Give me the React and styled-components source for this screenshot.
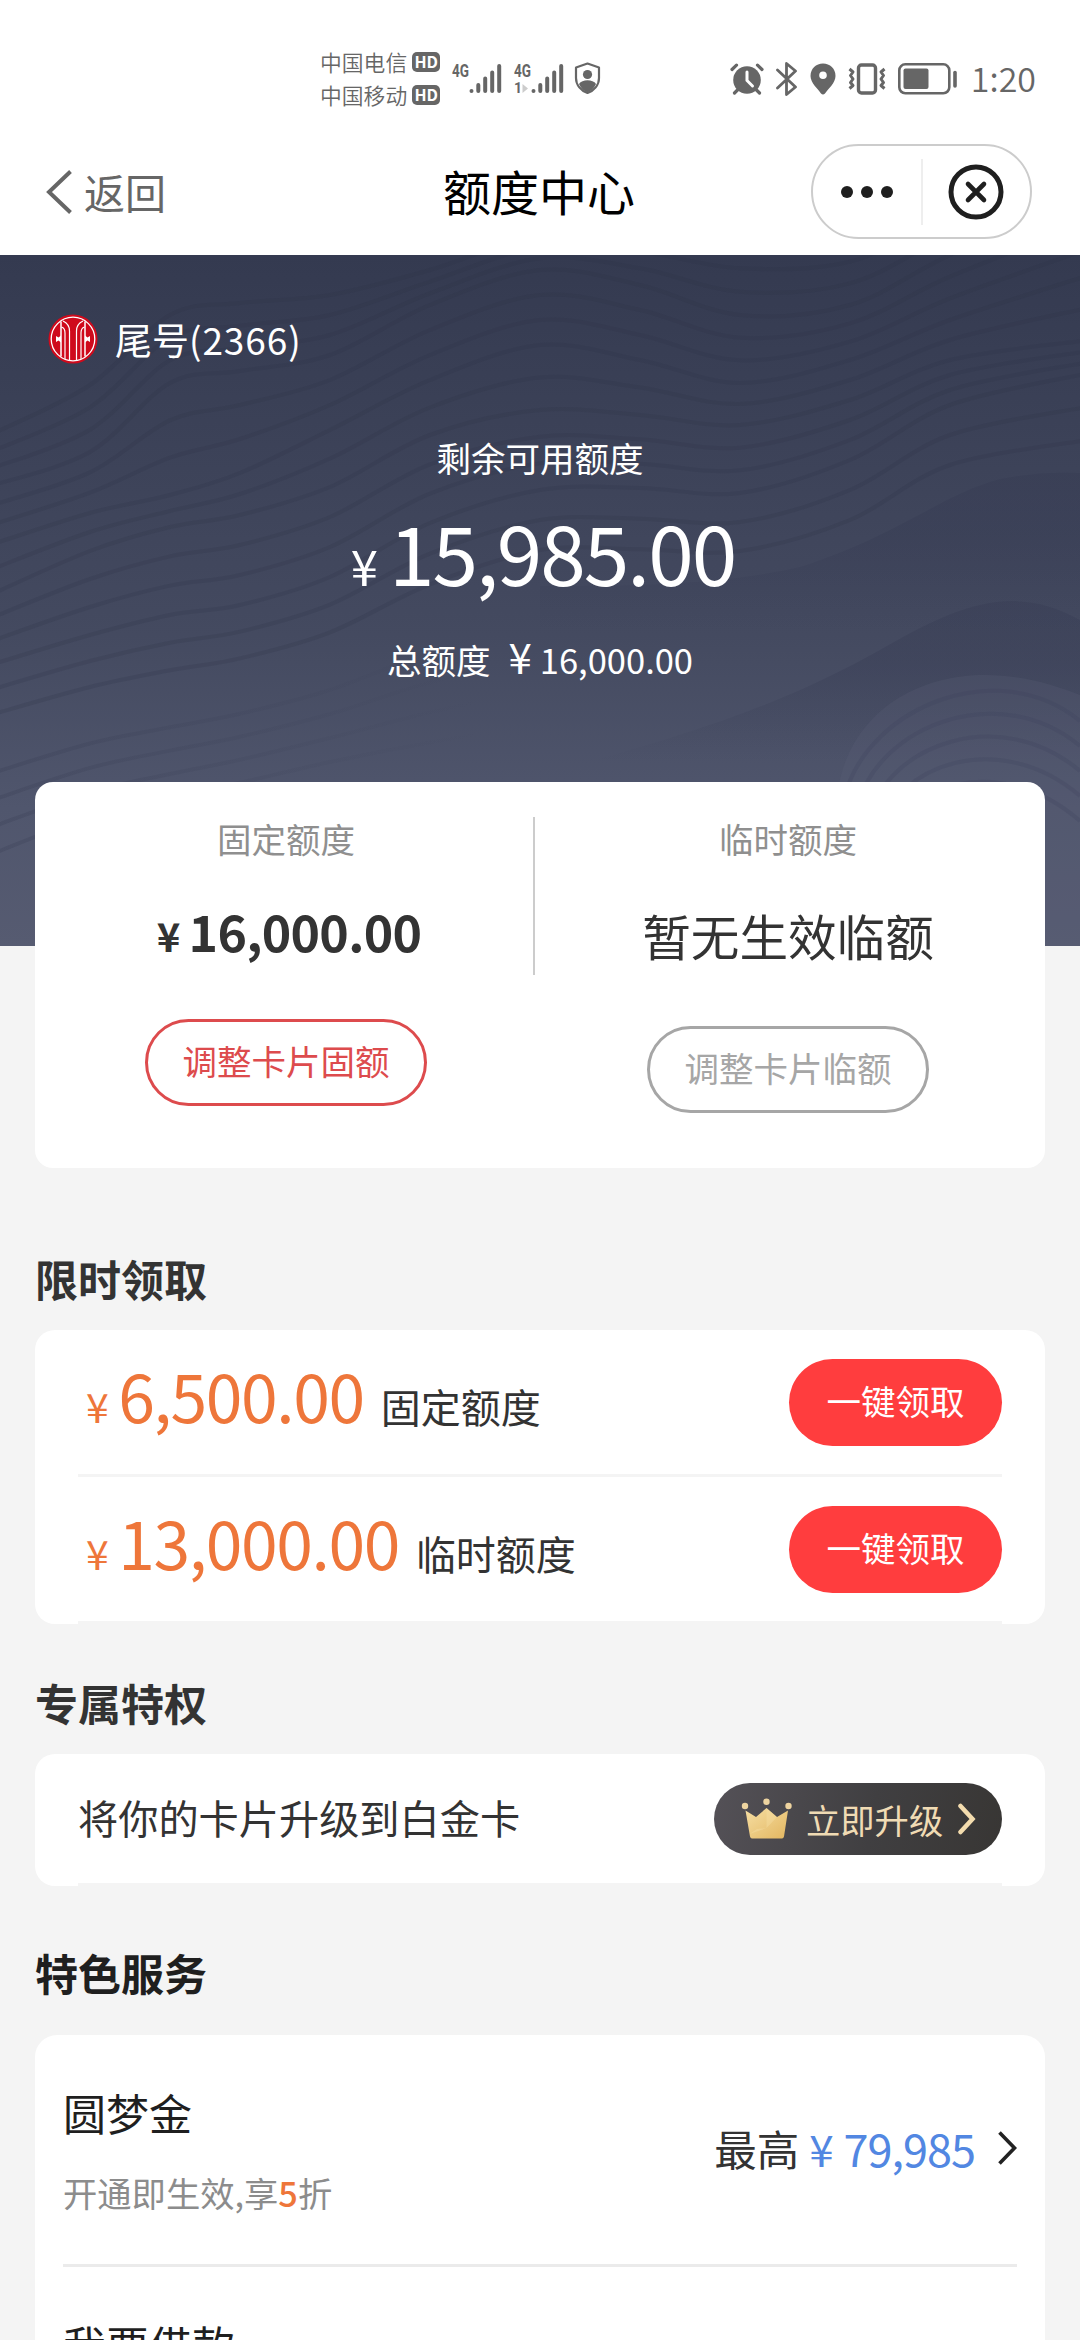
import React from "react";
import styled, { createGlobalStyle } from "styled-components";

const claims = [
  { amount: "6,500.00", label: "固定额度" },
  { amount: "13,000.00", label: "临时额度" },
];

// contour rows of the hero background, sampled at the x positions below
const WAVE_X = [-10, 90, 170, 240, 330, 430, 540, 640, 740, 850, 950, 1090];
const WAVE_KEYS = [
  { steps: 3, y: [180, 130, 60, 48, 40, 15, -20, -20, -10, -15, -60, -120] },
  { steps: 3, y: [231, 197, 128, 116, 100, 50, 15, 30, 60, 50, 0, -60] },
  { steps: 2, y: [290, 258, 240, 218, 175, 125, 90, 105, 128, 105, 65, 20] },
  { steps: 3, y: [340, 296, 272, 260, 232, 180, 155, 160, 170, 145, 105, 85] },
  { steps: 3, y: [410, 380, 360, 350, 322, 268, 235, 233, 238, 205, 150, 118] },
  { steps: 4, y: [485, 458, 443, 430, 405, 360, 325, 325, 325, 295, 240, 218] },
  { steps: 0, y: [620, 580, 560, 545, 525, 510, 495, 475, 460, 415, 360, 355] },
];

const smooth = (ys) => {
  const pts = WAVE_X.map((x, i) => [x, ys[i]]);
  let d = `M${pts[0][0]} ${pts[0][1]}`;
  for (let i = 0; i < pts.length - 1; i++) {
    const a = pts[i - 1] || pts[i];
    const b = pts[i];
    const c = pts[i + 1];
    const e = pts[i + 2] || c;
    d += ` C${b[0] + (c[0] - a[0]) / 6} ${b[1] + (c[1] - a[1]) / 6}`;
    d += ` ${c[0] - (e[0] - b[0]) / 6} ${c[1] - (e[1] - b[1]) / 6} ${c[0]} ${c[1]}`;
  }
  return d;
};

const waves = WAVE_KEYS.slice(0, 5).flatMap((key, k) => {
  const next = WAVE_KEYS[k + 1];
  return Array.from({ length: key.steps }, (_, s) =>
    smooth(key.y.map((y, i) => y + ((next.y[i] - y) * s) / key.steps))
  );
});

const lowerWaves = [0.25, 0.45, 0.65, 0.85].map((t) =>
  smooth(WAVE_KEYS[5].y.map((y, i) => y + (WAVE_KEYS[6].y[i] - y) * t))
);

const HeroWaves = () => (
  <WaveSvg viewBox="0 0 1080 691">
    <defs>
      <linearGradient id="shade" x1="0" y1="0" x2="0" y2="1">
        <stop offset="0.3" stopColor="#333850" stopOpacity="0.5" />
        <stop offset="0.75" stopColor="#333850" stopOpacity="0" />
      </linearGradient>
      <linearGradient id="fade" x1="0" y1="0" x2="1" y2="0">
        <stop offset="0" stopColor="#343950" stopOpacity="0.25" />
        <stop offset="0.45" stopColor="#343950" stopOpacity="0" />
      </linearGradient>
    </defs>
    {waves.map((d) => (
      <path key={d} d={d} fill="none" stroke="#2b3046" strokeOpacity="0.2" strokeWidth="4" />
    ))}
    {lowerWaves.map((d) => (
      <path key={d} d={d} fill="none" stroke="url(#fade)" strokeWidth="4" />
    ))}
    <path
      d="M540 331 C640 331 720 330 800 312 C900 280 940 240 1000 224 Q1040 216 1080 218 V430 H540Z"
      fill="url(#shade)"
      opacity="0.6"
    />
    <path
      d="M500 530 C700 480 790 445 880 395 C950 355 1010 325 1080 365 V560 H500Z"
      fill="url(#shade)"
      opacity="0.6"
    />
    <path
      d="M836 560 C836 470 905 420 985 420 C1020 420 1050 428 1080 440 V691 H860Z"
      fill="#5a6179"
      opacity="0.25"
    />
    {[0, 1, 2, 3, 4].map((i) => (
      <path
        key={i}
        d={`M${845 + i * 12} ${540 + i * 12} C${870 + i * 8} ${450 + i * 20} 1000 ${400 + i * 24} 1080 ${466 + i * 25}`}
        fill="none"
        stroke="#3c4259"
        strokeOpacity="0.22"
        strokeWidth="4"
      />
    ))}
  </WaveSvg>
);

const BankLogo = () => (
  <svg width="50" height="50" viewBox="0 0 50 50">
    <circle cx="25" cy="25" r="24.5" fill="#cf0a1c" />
    <circle cx="25" cy="25" r="21.8" fill="none" stroke="#fff" strokeWidth="1.3" />
    <g fill="none" stroke="#fff" strokeWidth="1.2">
      <path d="M15 7 Q21.500 10 21.500 17 V46" />
      <path d="M35 7 Q28.500 10 28.500 17 V46" />
      <path d="M13 7.500 V42.500" strokeWidth="1.5" />
      <path d="M37 7.500 V42.500" strokeWidth="1.5" />
      <path d="M13.500 13 Q17 14 17 19 V45" />
      <path d="M36.500 13 Q33 14 33 19 V45" />
    </g>
    <path d="M8 22 L10.500 23.500 L13 21.500 V28.500 L10.500 26.500 L8 28Z" fill="#fff" />
    <path d="M42 22 L39.500 23.500 L37 21.500 V28.500 L39.500 26.500 L42 28Z" fill="#fff" />
  </svg>
);

const Signal = ({ second }) => (
  <svg width="52" height="44" viewBox="-2 -6 52 44" overflow="visible">
    <g stroke="#666" strokeWidth="4" strokeLinecap="round">
      <path d="M19.500 29V28.900M26.300 29V23M33.200 29V16.500M40.200 29V10.500M47.200 29V4" />
    </g>
    {second && <path d="M8.500 22V31L14 26.500Z" fill="#ccc" />}
    <text x="0" y="14.500" fontSize="18" fontWeight="700" fill="#666" textLength="17" lengthAdjust="spacingAndGlyphs">
      4G
    </text>
    {second && (
      <text x="0" y="31" fontSize="14" fontWeight="700" fill="#666">
        1
      </text>
    )}
  </svg>
);

const Shield = () => (
  <svg width="27" height="33" viewBox="0 0 27 33">
    <path
      d="M13.500 1.500 L25 5.500 V16 C25 23 20 28.500 13.500 31 C7 28.500 2 23 2 16 V5.500Z"
      fill="none"
      stroke="#666"
      strokeWidth="2.200"
      strokeLinejoin="round"
    />
    <circle cx="13.500" cy="12.500" r="4.600" fill="#666" />
    <path d="M5 22 C8 17 19 17 22 22 C20 26.500 17 29 13.500 30.500 C10 29 7 26.500 5 22Z" fill="#666" />
  </svg>
);

const Alarm = () => (
  <svg width="34" height="32" viewBox="0 0 34 32">
    <circle cx="17" cy="17" r="13.800" fill="#666" />
    <g stroke="#666" strokeWidth="3.200" strokeLinecap="round">
      <path d="M2 6.500L6.500 2.200M32 6.500L27.500 2.200M7.500 27L4.500 30M26.500 27L29.500 30" />
    </g>
    <path d="M17 9V17.500L22.500 23" fill="none" stroke="#fff" strokeWidth="3" strokeLinecap="round" />
  </svg>
);

const Bluetooth = () => (
  <svg width="22" height="34" viewBox="0 0 22 34">
    <path
      d="M1.500 8L19.500 25L10.500 32.500V1.500L19.500 9L1.500 26"
      fill="none"
      stroke="#666"
      strokeWidth="2.800"
      strokeLinejoin="round"
      strokeLinecap="round"
    />
  </svg>
);

const Pin = () => (
  <svg width="26" height="32" viewBox="0 0 26 32">
    <path
      fillRule="evenodd"
      d="M13 0.500C20 0.500 25.500 5.500 25.500 13C25.500 20 18 26 15 30.500Q13 32.500 11 30.500C8 26 0.500 20 0.500 13C0.500 5.500 6 0.500 13 0.500ZM13 8.500A3.800 3.800 0 1 0 13 16.100A3.800 3.800 0 1 0 13 8.500Z"
      fill="#666"
    />
  </svg>
);

const Vibrate = () => (
  <svg width="38" height="32" viewBox="0 0 38 32">
    <rect x="10.500" y="2" width="17" height="28" rx="3" fill="none" stroke="#666" strokeWidth="3.400" />
    <path
      d="M1.500 6L5 9L2.500 12.500L5 16L2.500 19.500L5 22.500L1.500 25.500M36.500 6L33 9L35.500 12.500L33 16L35.500 19.500L33 22.500L36.500 25.500"
      fill="none"
      stroke="#666"
      strokeWidth="3"
      strokeLinejoin="round"
    />
  </svg>
);

const Battery = () => (
  <svg width="60" height="32" viewBox="0 0 60 32">
    <rect x="1.300" y="1.300" width="50" height="29" rx="6" fill="none" stroke="#666" strokeWidth="2.600" />
    <rect x="5.500" y="5.500" width="25" height="20.500" rx="2" fill="#666" />
    <path d="M57 9.500V23" stroke="#666" strokeWidth="3.600" strokeLinecap="round" />
  </svg>
);

const Crown = () => (
  <svg width="52" height="42" viewBox="0 0 52 42">
    <defs>
      <linearGradient id="gold" x1="0" y1="0" x2="1" y2="1">
        <stop offset="0" stopColor="#f6dfa4" />
        <stop offset="1" stopColor="#e3b660" />
      </linearGradient>
    </defs>
    <path d="M4.500 12.500L15 19L25.500 10L36 19L47 12.500L43 38.500Q42.500 40.500 41 40.500H11Q9.500 40.500 9 38.500Z" fill="url(#gold)" />
    <path d="M25.500 10V30L36 19ZM25.500 30L8.500 36L16 31Z" fill="#f8e2a8" opacity="0.4" />
    <circle cx="4" cy="8" r="3.200" fill="#eed4a0" />
    <circle cx="25.500" cy="3.800" r="3.200" fill="#eed4a0" />
    <circle cx="47.500" cy="8" r="3.200" fill="#eed4a0" />
  </svg>
);

const App = () => {
  return (
    <Page>
      <GlobalStyle />
      <StatusBar>
        <Carriers>
          <Carrier>
            中国电信<Hd>HD</Hd>
          </Carrier>
          <Carrier>
            中国移动<Hd>HD</Hd>
          </Carrier>
        </Carriers>
        <Signals>
          <Signal />
          <Signal second />
          <Shield />
        </Signals>
        <StatusIcons>
          <Alarm />
          <Bluetooth />
          <Pin />
          <Vibrate />
          <Battery />
        </StatusIcons>
        <Time>1:20</Time>
      </StatusBar>

      <NavBar>
        <Back>
          <svg width="27" height="44" viewBox="0 0 27 44">
            <path d="M24.500 1.500L3 22L24.500 42.500" fill="none" stroke="#666" strokeWidth="4" />
          </svg>
          <span>返回</span>
        </Back>
        <Title>额度中心</Title>
        <Capsule>
          <CapsuleHalf>
            <svg width="54" height="14" viewBox="0 0 54 14">
              <circle cx="7" cy="7" r="6" fill="#1f1f1f" />
              <circle cx="27" cy="7" r="6" fill="#1f1f1f" />
              <circle cx="47" cy="7" r="6" fill="#1f1f1f" />
            </svg>
          </CapsuleHalf>
          <CapsuleLine />
          <CapsuleHalf>
            <svg width="56" height="56" viewBox="0 0 56 56">
              <circle cx="28" cy="28" r="25" fill="none" stroke="#1f1f1f" strokeWidth="5" />
              <path d="M20 20L36 36M36 20L20 36" stroke="#1f1f1f" strokeWidth="4.600" strokeLinecap="round" />
            </svg>
          </CapsuleHalf>
        </Capsule>
      </NavBar>

      <Hero>
        <HeroWaves />
        <HeroContent>
          <CardNumber>
            <BankLogo />
            <span>
              尾号<Digits>(2366)</Digits>
            </span>
          </CardNumber>
          <AvailableLabel>剩余可用额度</AvailableLabel>
          <Available>
            <Yen $size={49} $gap={13}>¥</Yen>15,985.00
          </Available>
          <Total>
            总额度
            <TotalYen>¥</TotalYen>
            16,000.00
          </Total>
        </HeroContent>
      </Hero>

      <Content>
        <LimitCard>
          <LimitColumn>
            <LimitLabel>固定额度</LimitLabel>
            <FixedAmount>
              <Yen $size={40} $gap={9}>¥</Yen>16,000.00
            </FixedAmount>
            <OutlineButton $color="#dd4b4d">调整卡片固额</OutlineButton>
          </LimitColumn>
          <LimitDivider />
          <LimitColumn $wide>
            <LimitLabel>临时额度</LimitLabel>
            <TempAmount>暂无生效临额</TempAmount>
            <OutlineButton $color="#a6a6a6">调整卡片临额</OutlineButton>
          </LimitColumn>
        </LimitCard>

        <SectionTitle $top={80}>限时领取</SectionTitle>
        <Card>
          {claims.map((claim) => (
            <ClaimRow key={claim.label}>
              <ClaimText>
                <Yen $size={41} $gap={11}>¥</Yen>
                {claim.amount}
                <ClaimLabel>{claim.label}</ClaimLabel>
              </ClaimText>
              <ClaimButton>一键领取</ClaimButton>
            </ClaimRow>
          ))}
        </Card>

        <SectionTitle $top={48}>专属特权</SectionTitle>
        <Card>
          <UpgradeRow>
            <UpgradeText>将你的卡片升级到白金卡</UpgradeText>
            <UpgradeButton>
              <Crown />
              立即升级
              <svg width="20" height="32" viewBox="0 0 20 32">
                <path d="M4.500 3L16.500 16L4.500 29" fill="none" stroke="#f3dcae" strokeWidth="4.500" strokeLinecap="round" />
              </svg>
            </UpgradeButton>
          </UpgradeRow>
        </Card>

        <SectionTitle $top={56} $dark>
          特色服务
        </SectionTitle>
        <ServiceCard>
          <ServiceRow>
            <div>
              <ServiceName>圆梦金</ServiceName>
              <ServiceDesc>
                开通即生效,享<b>5</b>折
              </ServiceDesc>
            </div>
            <ServiceMax>
              最高
              <MaxAmount>
                <Yen $size={44} $gap={11}>¥</Yen>79,985
              </MaxAmount>
              <svg width="20" height="34" viewBox="0 0 20 34">
                <path d="M2.500 1.500L17.500 17L2.500 32.500" fill="none" stroke="#222" strokeWidth="3.600" />
              </svg>
            </ServiceMax>
          </ServiceRow>
          <ServiceRow>
            <ServiceName>我要借款</ServiceName>
          </ServiceRow>
        </ServiceCard>
      </Content>
    </Page>
  );
};

export default App;

const GlobalStyle = createGlobalStyle`
  * {
    box-sizing: border-box;
  }
  body {
    margin: 0;
    background: #f4f4f4;
  }
  svg {
    display: block;
    flex: none;
  }
  button {
    font-family: inherit;
    padding: 0;
    border: none;
  }
`;

const Page = styled.div`
  width: 1080px;
  height: 2340px;
  overflow: hidden;
  background: #f4f4f4;
  font-family: "Noto Sans CJK SC", sans-serif;
  color: #333;
  white-space: nowrap;
`;

const StatusBar = styled.div`
  height: 120px;
  padding: 45px 44px 0 320px;
  display: flex;
  align-items: flex-start;
  background: #fff;
  color: #666;
`;

const Carriers = styled.div`
  width: 130px;
`;

const Carrier = styled.div`
  height: 33px;
  display: flex;
  align-items: center;
  gap: 5px;
  font-size: 21.8px;
  font-weight: 350;
  line-height: 32px;
`;

const Hd = styled.span`
  width: 28px;
  height: 20px;
  border-radius: 5px;
  background: #666;
  color: #fff;
  font-size: 16px;
  font-weight: 700;
  line-height: 19px;
  text-align: center;
`;

const Signals = styled.div`
  margin-top: 11px;
  display: flex;
  align-items: center;
  gap: 10px;
  font-family: "Roboto", sans-serif;
`;

const StatusIcons = styled.div`
  margin: 17px 0 0 auto;
  display: flex;
  align-items: center;
  gap: 12px;
`;

const Time = styled.div`
  margin: 11px 0 0 13px;
  font-size: 34px;
  font-weight: 350;
  line-height: 44px;
`;

const NavBar = styled.div`
  height: 135px;
  padding: 24px 48px 16px 46px;
  display: grid;
  grid-template-columns: 1fr auto 1fr;
  align-items: center;
  background: #fff;
`;

const Back = styled.div`
  display: flex;
  align-items: center;
  gap: 11px;
  font-size: 41px;
  line-height: 56px;
  color: #666;

  span {
    padding-bottom: 2px;
  }
`;

const Title = styled.h1`
  margin: 0;
  padding-bottom: 3px;
  font-size: 48px;
  font-weight: 400;
  line-height: 60px;
  color: #000;
`;

const Capsule = styled.div`
  justify-self: end;
  width: 221px;
  height: 95px;
  display: flex;
  align-items: center;
  border: 2px solid #ccc;
  border-radius: 48px;
`;

const CapsuleHalf = styled.div`
  flex: 1;
  display: flex;
  justify-content: center;
`;

const CapsuleLine = styled.div`
  width: 2px;
  height: 66px;
  background: #eee;
`;

const Hero = styled.div`
  position: relative;
  height: 691px;
  background: linear-gradient(#343a50, #444a60 55%, #50566d 80%, #565b71);
  color: #fff;
`;

const WaveSvg = styled.svg`
  position: absolute;
  inset: 0;
  width: 1080px;
  height: 691px;
`;

const HeroContent = styled.div`
  position: relative;
  padding-top: 59px;
  display: flex;
  flex-direction: column;
  align-items: center;
`;

const CardNumber = styled.div`
  align-self: flex-start;
  height: 50px;
  margin-left: 48px;
  display: flex;
  align-items: center;
  gap: 17px;
  font-size: 37px;
`;

const Digits = styled.span`
  letter-spacing: 0.9px;
`;

const AvailableLabel = styled.div`
  margin-top: 69px;
  font-size: 34.5px;
  line-height: 48px;
`;

const Available = styled.div`
  margin-top: 20px;
  padding-left: 6px;
  font-size: 82px;
  line-height: 100px;
  letter-spacing: -2px;
`;

const Yen = styled.span`
  margin-right: ${(p) => p.$gap}px;
  font-size: ${(p) => p.$size}px;
  line-height: 0;
`;

const Total = styled.div`
  margin-top: 34px;
  font-size: 34.5px;
  line-height: 48px;
`;

const TotalYen = styled.span`
  margin: 0 8px 0 18px;
  font-size: 42px;
  line-height: 0;
`;

const Content = styled.div`
  position: relative;
  margin-top: -164px;
  padding: 0 35px;
`;

const Card = styled.div`
  padding: 0 43px;
  border-radius: 20px;
  background: #fff;
`;

const LimitCard = styled.div`
  height: 386px;
  display: flex;
  border-radius: 18px;
  background: #fff;
`;

const LimitColumn = styled.div`
  flex: none;
  width: ${(p) => (p.$wide ? 506 : 502)}px;
  padding-top: 32px;
  display: flex;
  flex-direction: column;
  align-items: center;
`;

const LimitDivider = styled.div`
  flex: none;
  width: 2px;
  height: 158px;
  margin: 35px 0 0 -4px;
  background: #ccc;
`;

const LimitLabel = styled.div`
  font-size: 34.5px;
  line-height: 48px;
  color: #8f8f8f;
`;

const FixedAmount = styled.div`
  margin: 38px 0 -1px;
  padding-left: 6px;
  font-size: 50px;
  font-weight: 700;
  line-height: 60px;
  letter-spacing: -0.7px;
`;

const TempAmount = styled.div`
  margin-top: 43px;
  font-size: 48.6px;
  line-height: 61px;
`;

const OutlineButton = styled.button`
  width: 282px;
  height: 87px;
  margin-top: 60px;
  padding-bottom: 5px;
  border: 3px solid ${(p) => p.$color};
  border-radius: 44px;
  background: #fff;
  color: ${(p) => p.$color};
  font-size: 34.5px;
`;

const SectionTitle = styled.h2`
  margin: ${(p) => p.$top}px 0 ${(p) => (p.$dark ? 33 : 22)}px;
  font-size: 43px;
  font-weight: 700;
  line-height: 60px;
  color: ${(p) => (p.$dark ? "#1f1f1f" : "#333")};
`;

const ClaimRow = styled.div`
  height: 147px;
  display: flex;
  align-items: center;
  justify-content: space-between;
  border-bottom: 3px solid #f4f4f4;
`;

const ClaimText = styled.div`
  padding: 0 0 17px 8px;
  font-size: 66px;
  line-height: 80px;
  letter-spacing: -1.4px;
  color: #ee763a;
`;

const ClaimLabel = styled.span`
  margin-left: 17px;
  font-size: 40px;
  line-height: 0;
  letter-spacing: 0;
  color: #333;
`;

const ClaimButton = styled.button`
  width: 213px;
  height: 87px;
  padding-bottom: 4px;
  border-radius: 44px;
  background: #ff3d3e;
  color: #fff;
  font-size: 34.5px;
`;

const UpgradeRow = styled.div`
  height: 132px;
  display: flex;
  align-items: center;
  justify-content: space-between;
  border-bottom: 3px solid #f4f4f4;
`;

const UpgradeText = styled.div`
  padding-bottom: 4px;
  font-size: 40.2px;
`;

const UpgradeButton = styled.button`
  width: 288px;
  height: 72px;
  padding-left: 27px;
  display: flex;
  align-items: center;
  gap: 13px;
  border-radius: 36px;
  background: linear-gradient(100deg, #545157, #403f41 55%, #383634);
  color: #f0dbb4;
  font-size: 34.3px;
`;

const ServiceCard = styled.div`
  height: 420px;
  padding: 0 28px;
  border-radius: 22px;
  background: #fff;
`;

const ServiceRow = styled.div`
  height: 232px;
  padding-top: 47px;
  display: flex;
  justify-content: space-between;
  border-bottom: 3px solid #ebebeb;
`;

const ServiceName = styled.div`
  font-size: 43px;
  line-height: 60px;
  color: #1f1f1f;
`;

const ServiceDesc = styled.div`
  margin-top: 26px;
  font-size: 34.3px;
  line-height: 48px;
  color: #8c8c8c;

  b {
    font-weight: 500;
    color: #ee763a;
  }
`;

const ServiceMax = styled.div`
  height: 60px;
  margin-top: 36px;
  display: flex;
  align-items: center;
  font-size: 42.5px;
  line-height: 60px;
`;

const MaxAmount = styled.span`
  margin: 0 22px 0 10px;
  font-size: 45px;
  letter-spacing: -1px;
  color: #5287e2;
`;
